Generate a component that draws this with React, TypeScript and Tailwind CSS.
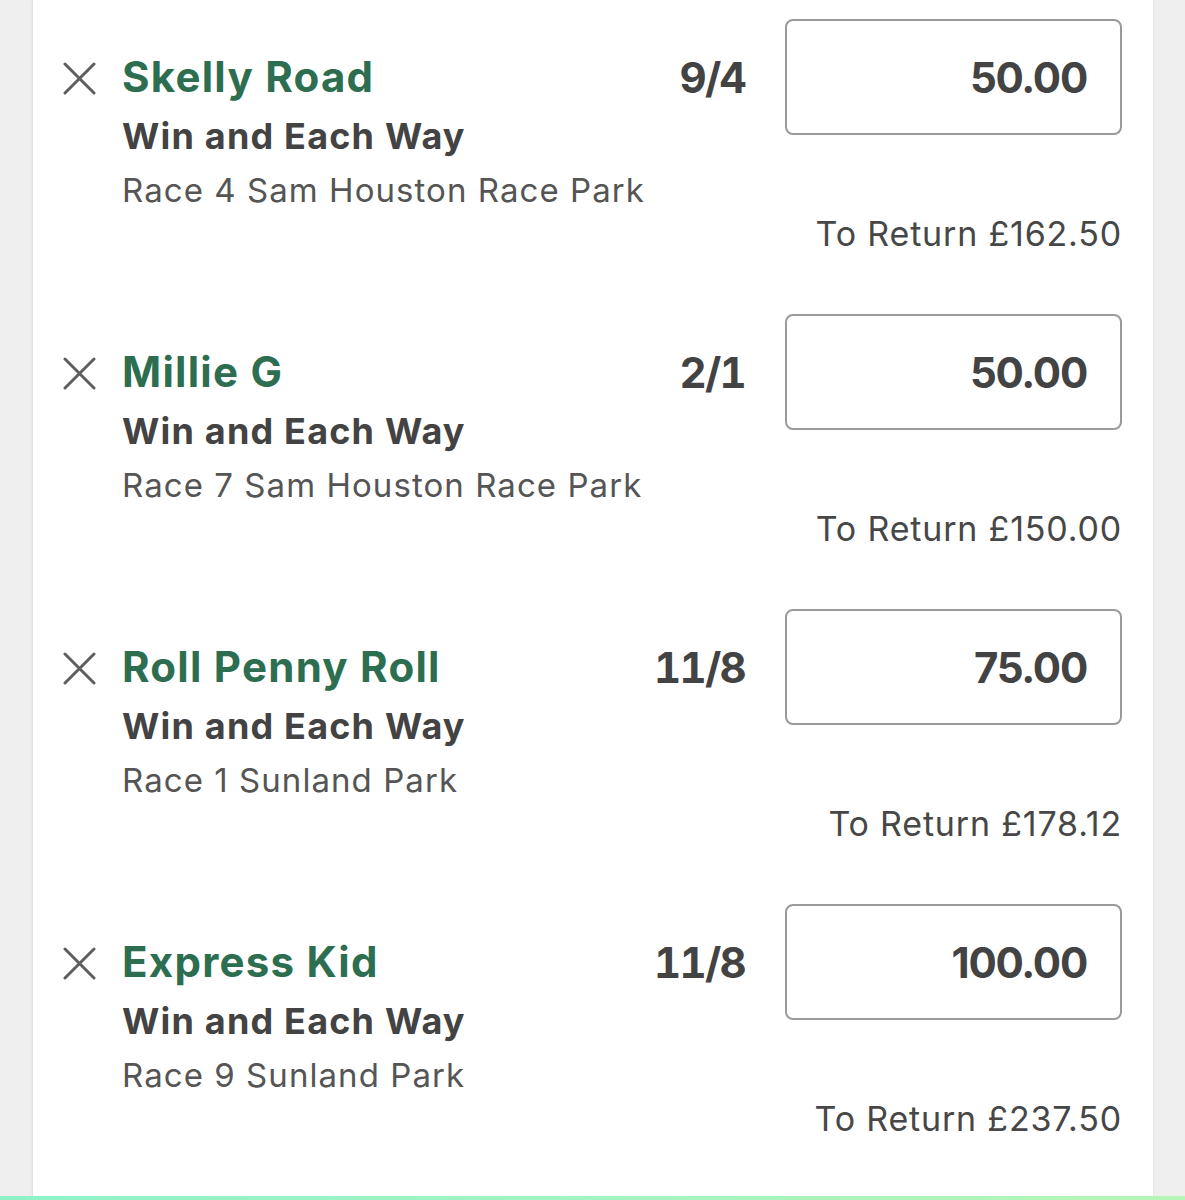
import React from 'react';

interface Bet {
  name: string;
  market: string;
  race: string;
  odds: string;
  stake: string;
  toReturn: string;
}

const bets: Bet[] = [
  { name: 'Skelly Road', market: 'Win and Each Way', race: 'Race 4 Sam Houston Race Park', odds: '9/4', stake: '50.00', toReturn: '£162.50' },
  { name: 'Millie G', market: 'Win and Each Way', race: 'Race 7 Sam Houston Race Park', odds: '2/1', stake: '50.00', toReturn: '£150.00' },
  { name: 'Roll Penny Roll', market: 'Win and Each Way', race: 'Race 1 Sunland Park', odds: '11/8', stake: '75.00', toReturn: '£178.12' },
  { name: 'Express Kid', market: 'Win and Each Way', race: 'Race 9 Sunland Park', odds: '11/8', stake: '100.00', toReturn: '£237.50' },
];

function CloseIcon() {
  return (
    <svg width="33" height="33" viewBox="0 0 33 33" fill="none">
      <path d="M2 2L31 31M31 2L2 31" stroke="#5e5e5e" strokeWidth={3} strokeLinecap="round" />
    </svg>
  );
}

function BetRow({ bet }: { bet: Bet }) {
  return (
    <div className="h-[295px] shrink-0">
      <div className="flex items-start">
        <button className="mt-[43px] flex h-[33px] w-[33px] shrink-0 items-center justify-center">
          <CloseIcon />
        </button>
        <div className="ml-[26px] flex-1">
          <div className="mt-[34px] text-[42px] font-bold leading-[48px] tracking-[0.03em] text-[#2c6e4f]">{bet.name}</div>
          <div className="text-[36px] font-bold leading-[70px] tracking-[0.033em] text-[#434343]">{bet.market}</div>
          <div className="text-[33px] leading-[38px] tracking-[0.032em] text-[#555]">{bet.race}</div>
        </div>
        <div className="flex h-[116px] items-center text-[42px] font-bold tabular-nums tracking-[-0.04em] text-[#434343]">{bet.odds}</div>
        <div className="ml-[40px] flex h-[116px] w-[337px] items-center justify-end rounded-[8px] border-[2.5px] border-[#9a9a9a] pr-[33px] text-[42px] font-bold tracking-[-0.03em] text-[#434343]">
          {bet.stake}
        </div>
      </div>
      <div className="mt-[5px] text-right text-[34px] leading-[40px] tracking-[0.024em] text-[#474747]">
        To Return {bet.toReturn}
      </div>
    </div>
  );
}

export default function App() {
  return (
    <div className="flex h-[1200px] w-[1185px] flex-col overflow-hidden bg-[#efefef]" style={{ fontFamily: 'Inter, "Noto Sans", sans-serif' }}>
      <div className="flex min-h-0 flex-1 overflow-hidden">
        <div className="ml-[32px] flex w-[1121px] flex-col border-l border-[#e2e2e2] bg-white pl-[30px] pr-[31px] pt-[19px] shadow-[0_0_3px_rgba(0,0,0,0.06)]">
          {bets.map((b) => (
            <BetRow key={b.name} bet={b} />
          ))}
        </div>
        <div className="flex-1 border-l border-[#e4e4e4] bg-[#efefef]" />
      </div>
      <div className="h-[4px] shrink-0 bg-gradient-to-r from-[#8ef2c9] to-[#b6f6b6]" />
    </div>
  );
}
